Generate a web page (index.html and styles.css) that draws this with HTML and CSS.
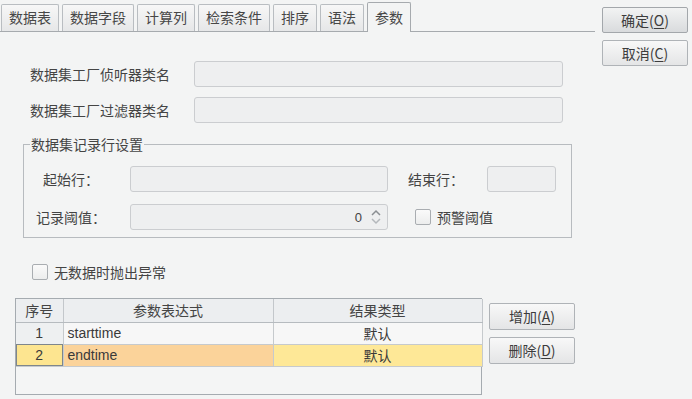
FILE: index.html
```html
<!DOCTYPE html>
<html lang="zh">
<head>
<meta charset="utf-8">
<link rel="stylesheet" href="styles.css">
</head>
<body>
<div class="app">
  <div class="main">
    <div class="tabs">
      <div class="tab">数据表</div>
      <div class="tab">数据字段</div>
      <div class="tab">计算列</div>
      <div class="tab">检索条件</div>
      <div class="tab">排序</div>
      <div class="tab">语法</div>
      <div class="tab active">参数</div>
    </div>
    <div class="panel">
      <div class="field-row first">
        <span class="field-label">数据集工厂侦听器类名</span>
        <span class="input wide"></span>
      </div>
      <div class="field-row">
        <span class="field-label">数据集工厂过滤器类名</span>
        <span class="input wide"></span>
      </div>
      <div class="group">
        <span class="group-title">数据集记录行设置</span>
        <div class="g-row">
          <span class="g-label">起始行：</span>
          <span class="input mid"></span>
          <span class="g-label2">结束行：</span>
          <span class="input small"></span>
        </div>
        <div class="g-row second">
          <span class="g-label">记录阈值：</span>
          <span class="input mid spin"><span class="spin-val">0</span><svg class="spin-ico" width="12" height="20" viewBox="0 0 12 20"><path d="M2 8 L6 4 L10 8" fill="none" stroke="#8a8e92" stroke-width="1.5"/><path d="M2 12 L6 16 L10 12" fill="none" stroke="#b4b8bc" stroke-width="1.5"/></svg></span>
          <span class="check-item warn"><span class="checkbox"></span><span>预警阈值</span></span>
        </div>
      </div>
      <div class="check-item throw"><span class="checkbox"></span><span>无数据时抛出异常</span></div>
      <div class="table-row">
        <div class="grid">
          <table>
            <colgroup><col class="c1"><col class="c2"><col class="c3"></colgroup>
            <thead><tr><th>序号</th><th>参数表达式</th><th>结果类型</th></tr></thead>
            <tbody>
              <tr><td class="num">1</td><td class="expr">starttime</td><td class="type">默认</td></tr>
              <tr class="sel"><td class="num">2</td><td class="expr">endtime</td><td class="type">默认</td></tr>
            </tbody>
          </table>
        </div>
        <div class="side-btns">
          <div class="btn">增加(<u>A</u>)</div>
          <div class="btn">删除(<u>D</u>)</div>
        </div>
      </div>
    </div>
  </div>
  <div class="right">
    <div class="btn default">确定(<u>O</u>)</div>
    <div class="btn">取消(<u>C</u>)</div>
  </div>
</div>
</body>
</html>
```

FILE: styles.css
```css
* { box-sizing: border-box; }
html, body { margin: 0; padding: 0; }
body {
  background: #f3f4f4;
  font-family: "Noto Sans CJK SC", "Liberation Sans", sans-serif;
  font-size: 14px;
  color: #444;
  width: 692px;
  height: 399px;
  overflow: hidden;
}
.app { display: flex; height: 399px; }
.main { width: 595px; }
.tabs {
  display: flex;
  align-items: flex-end;
  gap: 3px;
  height: 32px;
  padding-left: 1px;
  border-bottom: 1px solid #a6aaae;
}
.tab {
  height: 27px;
  line-height: 25px;
  padding: 0 7px;
  border: 1px solid #b9bdc1;
  border-bottom: none;
  border-radius: 2px 2px 0 0;
  background: linear-gradient(#f7f7f7, #e6e7e8);
  color: #474747;
}
.tab.active {
  height: 30px;
  line-height: 28px;
  margin-bottom: -1px;
  background: #f3f4f4;
  border-color: #a6aaae;
}
.panel { padding-top: 29px; }
.field-row { display: flex; align-items: center; padding-left: 30px; margin-bottom: 10px; }
.field-label { width: 164px; line-height: 20px; }
.input {
  display: block;
  height: 26px;
  border: 1px solid #cbcdd0;
  border-radius: 3px;
  background: #eeeff0;
}
.input.wide { width: 369px; }
.input.mid { width: 258px; }
.input.small { width: 69px; }
.group {
  position: relative;
  margin: 21px 0 0 23px;
  width: 549px;
  height: 94px;
  border: 1px solid #b7bbbf;
  padding-top: 21px;
}
.group-title {
  position: absolute;
  left: 6px;
  top: -11px;
  padding: 0 1px;
  line-height: 20px;
  background: #f3f4f4;
}
.g-row { display: flex; align-items: center; }
.g-row.second { margin-top: 12px; }
.g-label { width: 94px; text-align: center; margin-right: 12px; line-height: 20px; }
.g-label2 { width: 79px; margin-left: 20px; line-height: 20px; }
.spin { display: flex; align-items: center; justify-content: flex-end; padding-right: 5px; }
.spin-val { font-family: "Liberation Sans", sans-serif; font-size: 13px; color: #444; margin-right: 8px; }
.spin-ico { display: block; }
.check-item { display: flex; align-items: center; line-height: 20px; }
.checkbox {
  width: 16px;
  height: 16px;
  border: 1px solid #a9adb1;
  border-radius: 2px;
  background: linear-gradient(#fafafa, #eceded);
  margin-right: 6px;
}
.warn { margin-left: 27px; }
.throw { margin: 24px 0 0 32px; }
.table-row { display: flex; margin: 16px 0 0 15px; }
.grid {
  width: 467px;
  height: 97px;
  border: 1px solid #a5abb0;
  background: #f4f5f5;
}
table { border-collapse: collapse; table-layout: fixed; width: 466px; }
col.c1 { width: 47px; }
col.c2 { width: 210px; }
col.c3 { width: 209px; }
th {
  height: 23px;
  font-weight: normal;
  background: #eceef0;
  border-right: 1px solid #c3c7cb;
  border-bottom: 1px solid #b6bbbf;
  padding: 0;
  line-height: 21px;
  color: #444;
}
td {
  height: 22px;
  border-right: 1px solid #c6cacd;
  border-bottom: 1px solid #c6cacd;
  padding: 0;
  line-height: 20px;
  color: #3a3a3a;
}
td.num { text-align: center; background: #eef0f1; font-family: "Liberation Sans", sans-serif; }
td.expr { padding-left: 4px; font-family: "Liberation Sans", sans-serif; background: #f7f7f7; }
td.type { text-align: center; background: #f7f7f7; }
tr.sel td.num { background: #fde590; outline: 1px solid #7e868c; outline-offset: -1px; }
tr.sel td.expr { background: #fbd39a; }
tr.sel td.type { background: #fee897; }
.side-btns { display: flex; flex-direction: column; gap: 7px; margin: 5px 0 0 7px; }
.btn {
  width: 86px;
  height: 27px;
  line-height: 24px;
  text-align: center;
  border: 1px solid #afb3b7;
  border-radius: 2px;
  background: linear-gradient(#f8f8f8, #e4e5e6);
  color: #3c3c3c;
}
.btn u { text-underline-offset: 2px; }
.right { display: flex; flex-direction: column; gap: 7px; padding: 7px 0 0 7px; }
.right .btn { height: 26px; }
.btn.default { background: linear-gradient(#f2f3f3, #d9dbdd); border-color: #a3a7ab; }
```
